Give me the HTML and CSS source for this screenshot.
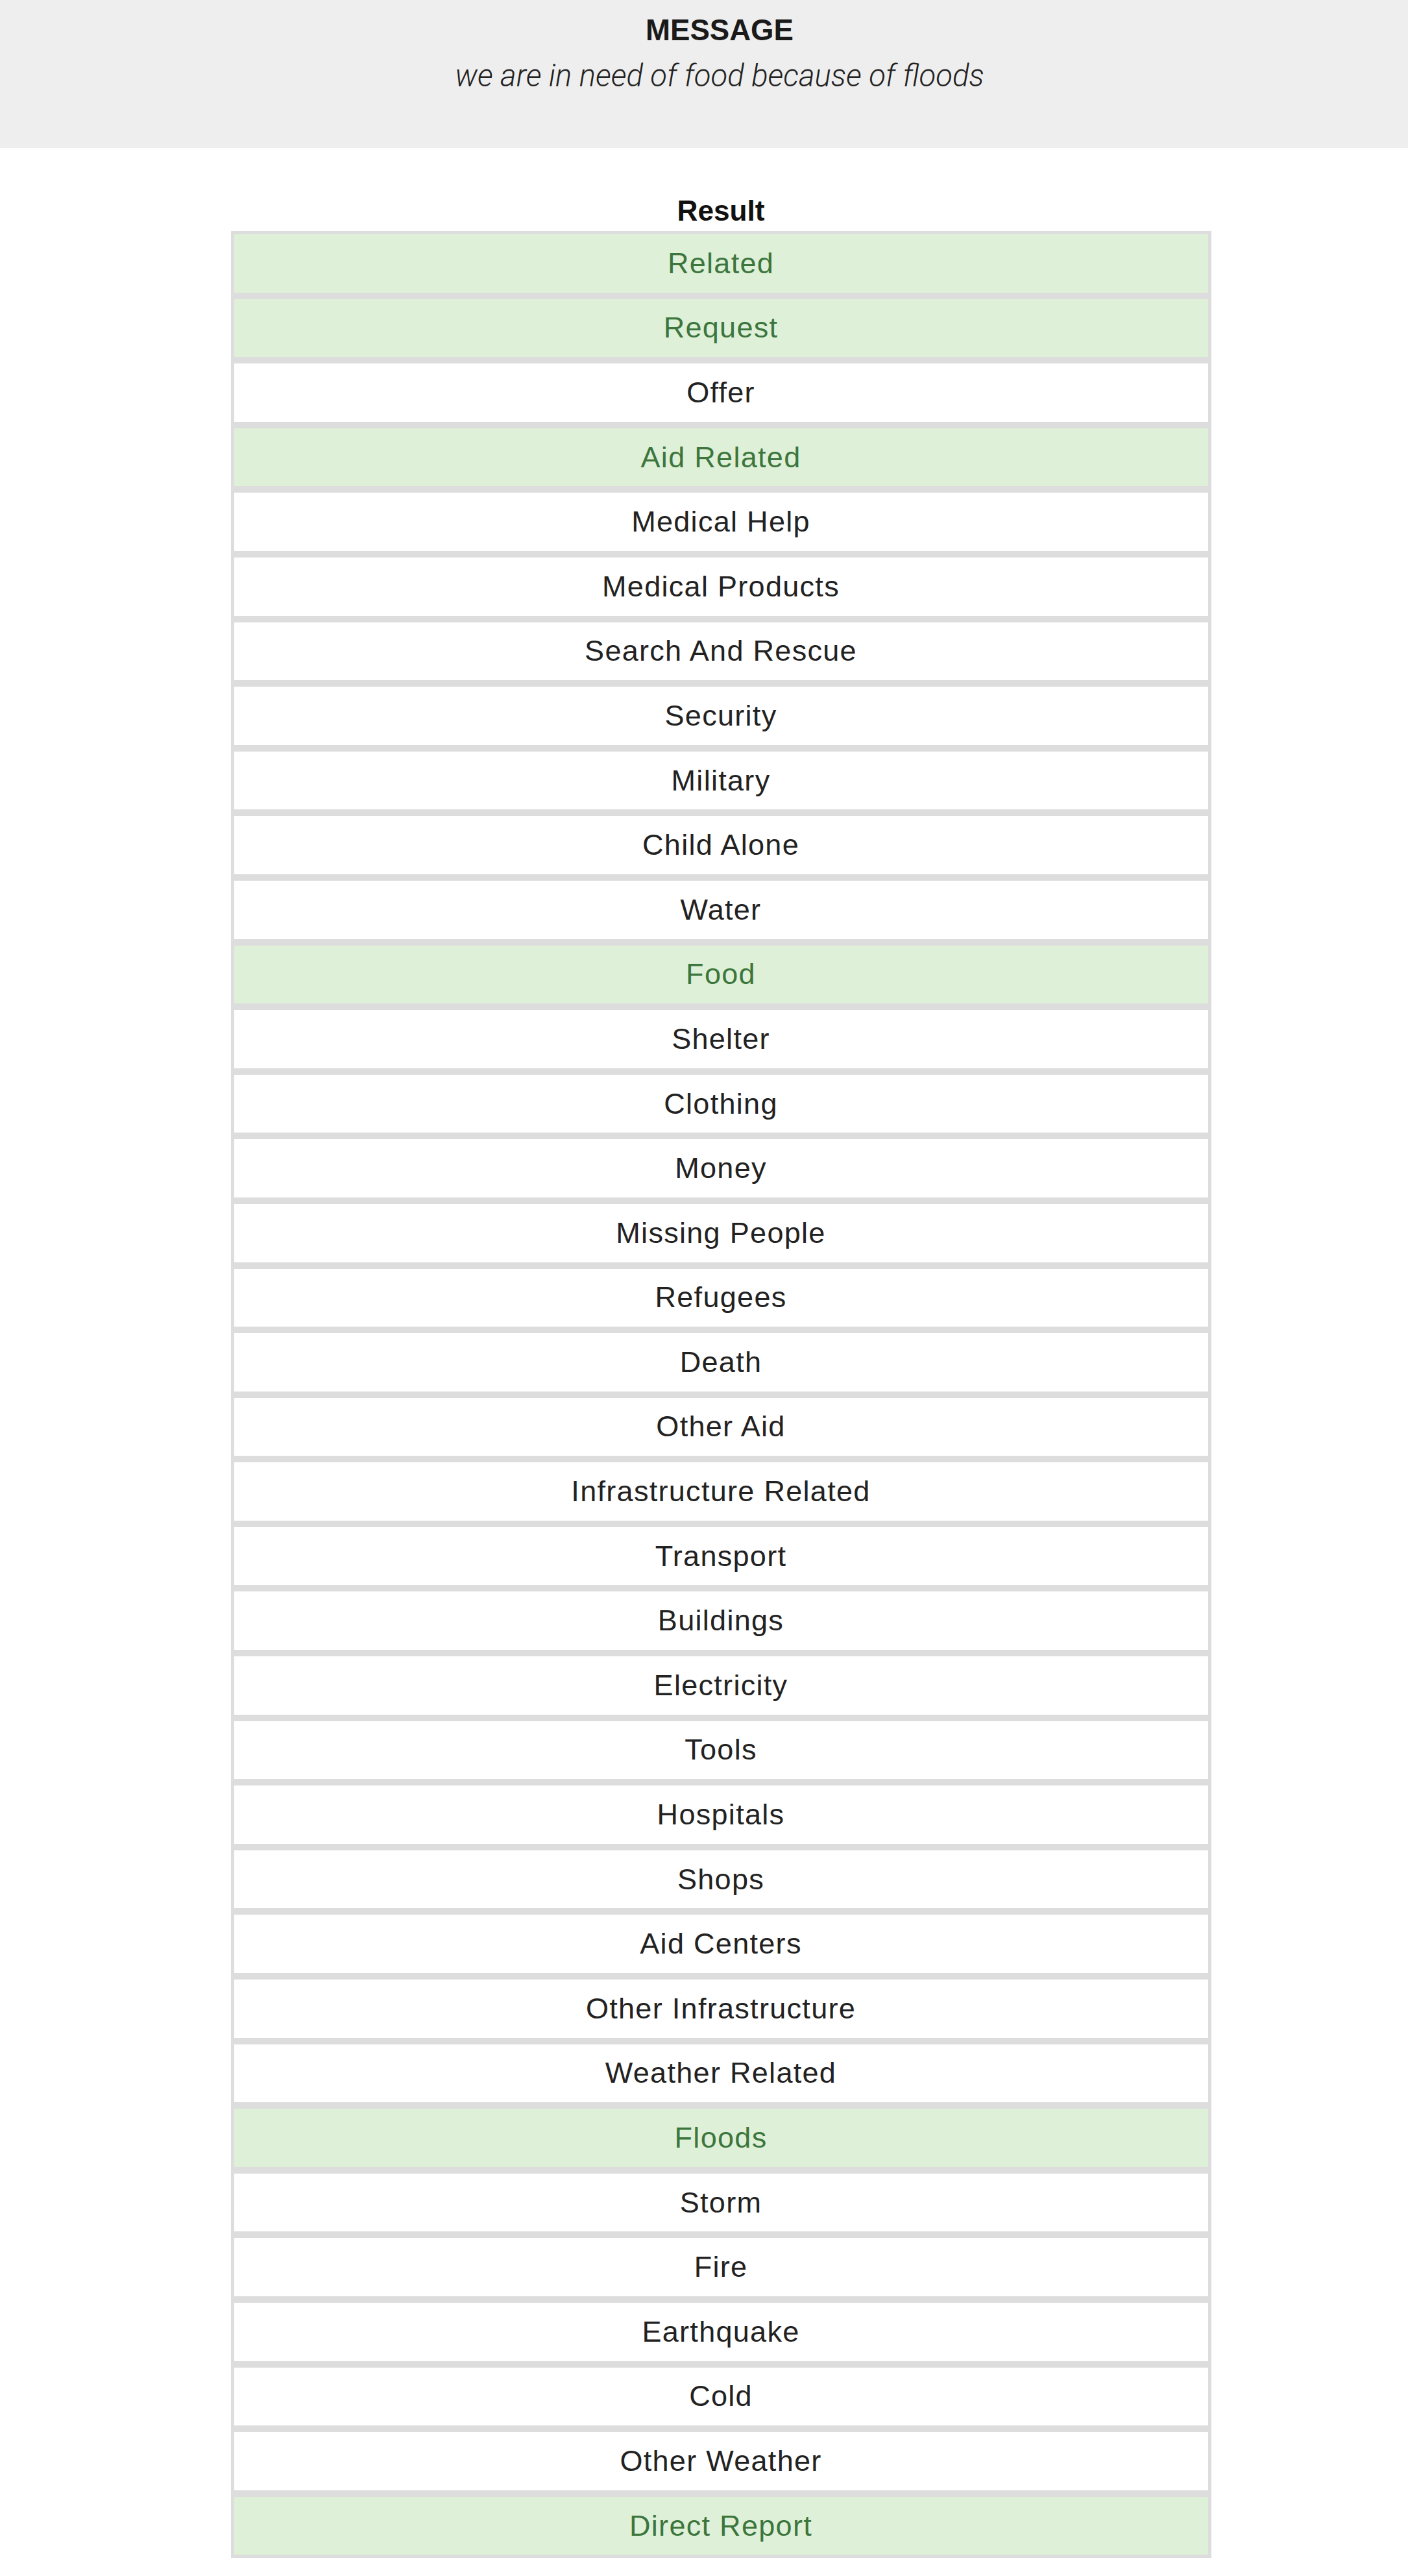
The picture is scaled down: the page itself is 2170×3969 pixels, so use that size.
FILE: index.html
```html
<!DOCTYPE html>
<html lang="en">
<head>
<meta charset="utf-8">
<title>Result</title>
<link rel="stylesheet" href="styles.css">
</head>
<body>
<header class="jumbo">
  <div class="inner">
    <h2 class="msg-title">MESSAGE</h2>
    <p class="msg-text">we are in need of food because of floods</p>
  </div>
</header>
<main class="main">
  <section class="result">
    <h3 class="result-title">Result</h3>
    <ul class="cats">
      <li class="cat on">Related</li>
      <li class="cat on">Request</li>
      <li class="cat">Offer</li>
      <li class="cat on">Aid Related</li>
      <li class="cat">Medical Help</li>
      <li class="cat">Medical Products</li>
      <li class="cat">Search And Rescue</li>
      <li class="cat">Security</li>
      <li class="cat">Military</li>
      <li class="cat">Child Alone</li>
      <li class="cat">Water</li>
      <li class="cat on">Food</li>
      <li class="cat">Shelter</li>
      <li class="cat">Clothing</li>
      <li class="cat">Money</li>
      <li class="cat">Missing People</li>
      <li class="cat">Refugees</li>
      <li class="cat">Death</li>
      <li class="cat">Other Aid</li>
      <li class="cat">Infrastructure Related</li>
      <li class="cat">Transport</li>
      <li class="cat">Buildings</li>
      <li class="cat">Electricity</li>
      <li class="cat">Tools</li>
      <li class="cat">Hospitals</li>
      <li class="cat">Shops</li>
      <li class="cat">Aid Centers</li>
      <li class="cat">Other Infrastructure</li>
      <li class="cat">Weather Related</li>
      <li class="cat on">Floods</li>
      <li class="cat">Storm</li>
      <li class="cat">Fire</li>
      <li class="cat">Earthquake</li>
      <li class="cat">Cold</li>
      <li class="cat">Other Weather</li>
      <li class="cat on">Direct Report</li>
    </ul>
  </section>
</main>
</body>
</html>
```

FILE: styles.css
```css
html, body {
  margin: 0;
  padding: 0;
  background: #ffffff;
}

body {
  font-family: "Liberation Sans", Arial, Helvetica, sans-serif;
  color: #222222;
}

.jumbo {
  background: #eeeeee;
  height: 228px;
  box-sizing: border-box;
  padding: 21px 0 0 48px;
}

.inner {
  text-align: center;
}

.msg-title {
  margin: 0;
  font-size: 45.6px;
  line-height: 52px;
  font-weight: 700;
  color: #1a1a1a;
}

.msg-text {
  margin: 18px 0 0 0;
  font-family: Roboto, "Liberation Sans", sans-serif;
  font-style: italic;
  font-weight: 300;
  font-size: 47.3px;
  line-height: 52px;
  color: #222222;
}

.main {
  padding: 72px 0 25px 52px;
}

.result {
  width: 1511px;
  margin: 0 auto;
}

.result-title {
  margin: 0 0 6px 0;
  text-align: center;
  font-size: 44.2px;
  line-height: 50px;
  font-weight: 700;
  color: #111111;
}

.cats {
  list-style: none;
  margin: 0;
  padding: 0;
  border: 5px solid #dddddd;
  background: #dddddd;
  display: flex;
  flex-direction: column;
  gap: 10px;
}

.cat {
  height: 89.6px;
  display: flex;
  align-items: center;
  justify-content: center;
  background: #ffffff;
  font-size: 45px;
  letter-spacing: 1.3px;
  color: #222222;
}

.cat.on {
  background: #dff0d8;
  color: #3c763d;
}
```
